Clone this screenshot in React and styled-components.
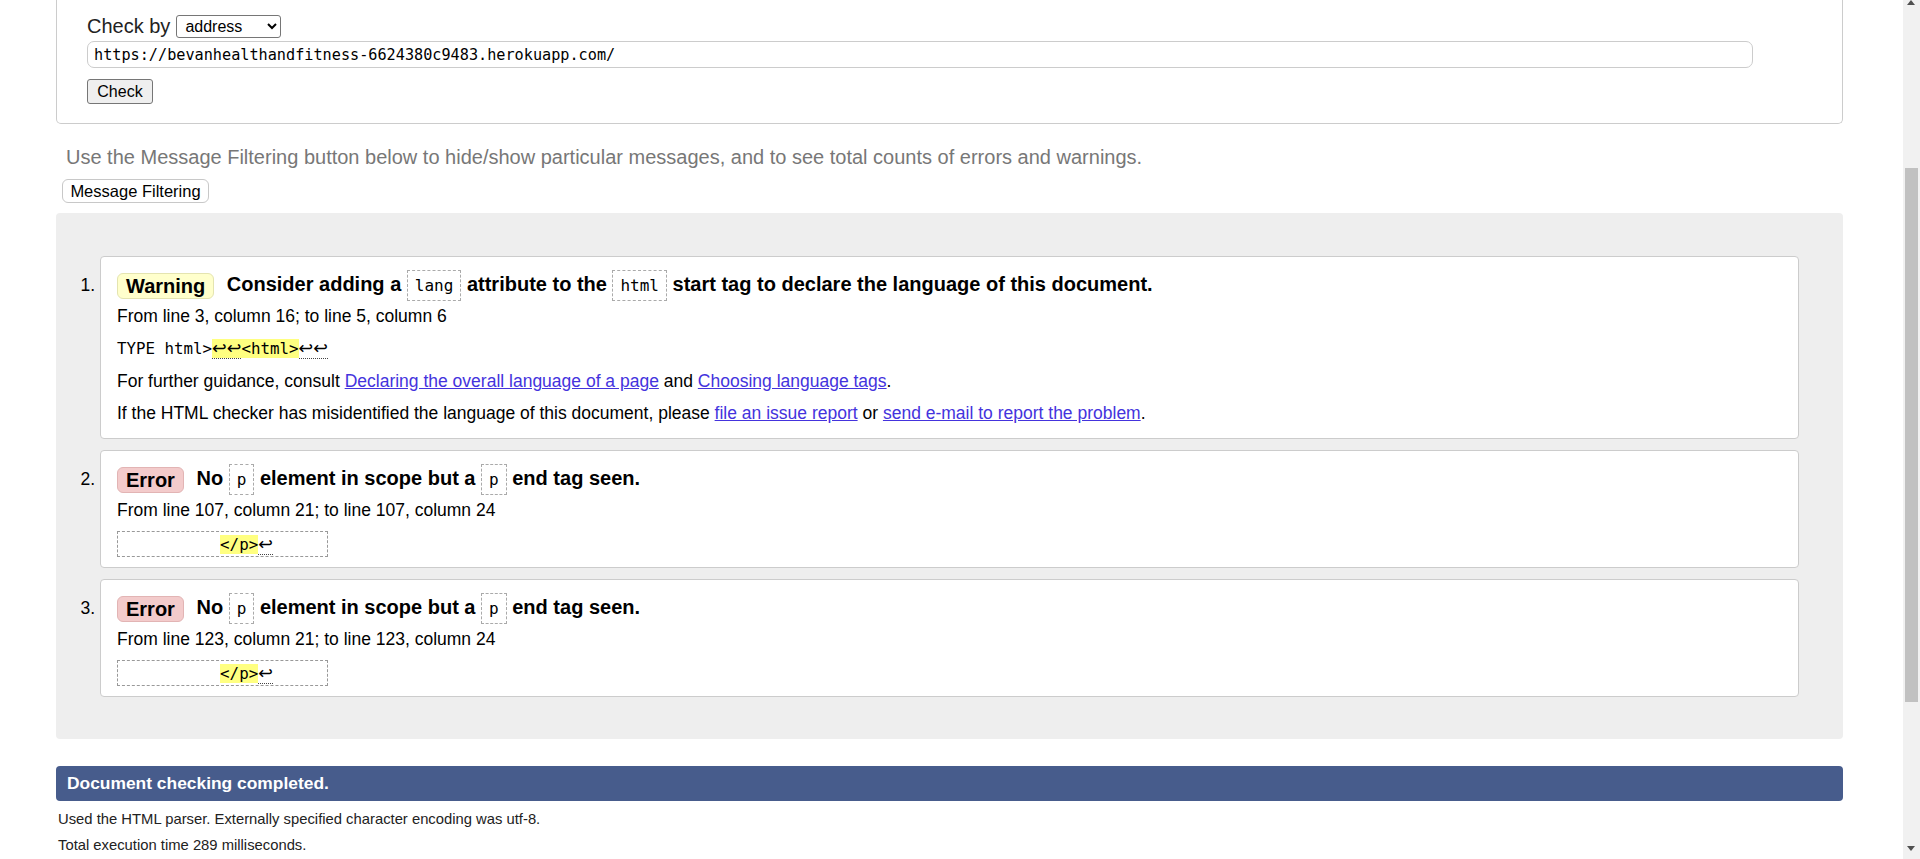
import React from "react";
import styled, { createGlobalStyle } from "styled-components";

const Global = createGlobalStyle`
  html, body {
    margin: 0;
    padding: 0;
    background: #fff;
    overflow: hidden;
  }
  body {
    font-family: "Liberation Sans", Arial, sans-serif;
    color: #000;
  }
`;

const Page = styled.div`
  width: 1920px;
  height: 859px;
  box-sizing: border-box;
  padding: 0 77px 0 56px;
  overflow: hidden;
`;

const FormBox = styled.div`
  border: 1px solid #ccc;
  border-top: none;
  border-radius: 0 0 5px 5px;
  padding: 14px 30px 19px;
`;

const CheckRow = styled.div`
  display: flex;
  align-items: center;
  gap: 6px;
  height: 24px;
  font-size: 20px;
  color: #222;
`;

const Select = styled.select`
  width: 105px;
  height: 23px;
  padding: 0 4px;
  font-family: "Liberation Sans", Arial, sans-serif;
  font-size: 16px;
  color: #000;
  background: #fff;
  border: 1px solid #767676;
  border-radius: 3px;
`;

const UrlInput = styled.input`
  display: block;
  box-sizing: border-box;
  width: 1666px;
  height: 27px;
  margin-top: 3px;
  padding: 0 6px;
  font-family: "DejaVu Sans Mono", monospace;
  font-size: 15.2px;
  color: #000;
  border: 1px solid #ccc;
  border-radius: 7px;
  outline: none;
`;

const CheckButton = styled.button`
  display: block;
  width: 66px;
  height: 25px;
  margin-top: 11px;
  padding: 0;
  font-family: "Liberation Sans", Arial, sans-serif;
  font-size: 16px;
  color: #000;
  background: #efefef;
  border: 1px solid #767676;
  border-radius: 3px;
`;

const Hint = styled.p`
  margin: 21px 0 0 10px;
  font-size: 20px;
  line-height: 24px;
  color: #777;
`;

const FilterButton = styled.button`
  display: block;
  width: 147px;
  height: 24px;
  margin: 10px 0 0 6px;
  padding: 0;
  font-family: "Liberation Sans", Arial, sans-serif;
  font-size: 16.5px;
  color: #000;
  background: #fff;
  border: 1px solid #c8c8c8;
  border-radius: 6px;
`;

const MessageList = styled.ol`
  margin: 10px 0 0;
  padding: 43px 44px 42px;
  background: #eee;
  border-radius: 4px;
  list-style: decimal;
`;

const Message = styled.li`
  background: #fff;
  border: 1px solid #ccc;
  border-radius: 4px;
  padding: 11px 16px 9px;
  font-size: 17.5px;

  & + & {
    margin-top: 11px;
  }
`;

const Title = styled.div`
  height: 32px;
  line-height: 32px;
  font-size: 20px;
  font-weight: bold;
  white-space: nowrap;
`;

const Badge = styled.span`
  display: inline-block;
  vertical-align: middle;
  line-height: 24px;
  padding: 0 8px;
  margin-right: 7px;
  border-radius: 6px;
  background: ${(p) => (p.$kind === "error" ? "#f3cbcb" : "#ffffcc")};
  border: 1px solid ${(p) => (p.$kind === "error" ? "#e2b4b4" : "#e4e4b0")};
`;

const Code = styled.code`
  display: inline-block;
  vertical-align: middle;
  padding: 5px 7px;
  font-family: "DejaVu Sans Mono", monospace;
  font-size: 16px;
  font-weight: normal;
  line-height: 19px;
  border: 1px dashed #aaa;
`;

const Line = styled.p`
  margin: 0;
  line-height: 32px;
`;

const Link = styled.a`
  color: #4433dd;
  text-decoration: underline;
`;

const Extract = styled.p`
  margin: 0;
  line-height: 32px;
  font-family: "DejaVu Sans Mono", monospace;
  font-size: 15.8px;
  white-space: pre;
`;

const ExtractRow = styled.p`
  margin: 5px 0 1px;
  line-height: 0;
`;

const ExtractBox = styled.code`
  display: inline-block;
  box-sizing: border-box;
  width: 211px;
  height: 26px;
  line-height: 24px;
  padding-left: 7px;
  font-family: "DejaVu Sans Mono", monospace;
  font-size: 15.8px;
  white-space: pre;
  border: 1px dashed #999;
`;

const Mark = styled.mark`
  background: #ffff80;
  color: inherit;
`;

const Lf = styled.span`
  font-family: "DejaVu Sans", sans-serif;
  font-size: 17.5px;
  border-bottom: 1px dotted #444;
`;

const Done = styled.div`
  margin-top: 27px;
  height: 35px;
  line-height: 35px;
  padding-left: 11px;
  font-size: 17.4px;
  font-weight: bold;
  color: #fff;
  background: #475c8c;
  border-radius: 4px;
`;

const Footer = styled.div`
  padding: 5px 0 0 2px;
`;

const FootLine = styled.p`
  margin: 0;
  line-height: 26px;
  font-size: 14.8px;
  color: #222;
`;

const Scrollbar = styled.div`
  position: fixed;
  top: 0;
  right: 0;
  width: 17px;
  height: 859px;
  background: #f1f1f1;
`;

const Thumb = styled.div`
  position: absolute;
  left: 2px;
  right: 2px;
  top: 168px;
  height: 534px;
  background: #c1c1c1;
`;

const Arrow = styled.span`
  position: absolute;
  left: 4px;
  width: 0;
  height: 0;
  border-left: 4.5px solid transparent;
  border-right: 4.5px solid transparent;
  ${(p) =>
    p.$up
      ? "top: 0; border-bottom: 5px solid #505050;"
      : "bottom: 8px; border-top: 5px solid #505050;"}
`;

const EndTagError = ({ from }) => (
  <Message>
    <Title>
      <Badge $kind="error">Error</Badge> No <Code>p</Code> element in scope but
      a <Code>p</Code> end tag seen.
    </Title>
    <Line>
      From line {from}, column 21; to line {from}, column 24
    </Line>
    <ExtractRow>
      <ExtractBox>
        {"          "}
        <Mark>{"</p>"}</Mark>
        <Lf>↩</Lf>
      </ExtractBox>
    </ExtractRow>
  </Message>
);

export default function App() {
  return (
    <>
      <Global />
      <Page>
        <FormBox>
          <CheckRow>
            Check by
            <Select defaultValue="address">
              <option value="address">address</option>
              <option value="upload">file upload</option>
              <option value="input">text input</option>
            </Select>
          </CheckRow>
          <UrlInput
            readOnly
            value="https://bevanhealthandfitness-6624380c9483.herokuapp.com/"
          />
          <CheckButton>Check</CheckButton>
        </FormBox>

        <Hint>
          Use the Message Filtering button below to hide/show particular
          messages, and to see total counts of errors and warnings.
        </Hint>
        <FilterButton>Message Filtering</FilterButton>

        <MessageList>
          <Message>
            <Title>
              <Badge>Warning</Badge> Consider adding a <Code>lang</Code>{" "}
              attribute to the <Code>html</Code> start tag to declare the
              language of this document.
            </Title>
            <Line>From line 3, column 16; to line 5, column 6</Line>
            <Extract>
              TYPE html&gt;
              <Mark>
                <Lf>↩↩</Lf>&lt;html&gt;
              </Mark>
              <Lf>↩↩</Lf>
            </Extract>
            <Line>
              For further guidance, consult{" "}
              <Link href="#">Declaring the overall language of a page</Link>{" "}
              and <Link href="#">Choosing language tags</Link>.
            </Line>
            <Line>
              If the HTML checker has misidentified the language of this
              document, please <Link href="#">file an issue report</Link> or{" "}
              <Link href="#">send e-mail to report the problem</Link>.
            </Line>
          </Message>
          <EndTagError from={107} />
          <EndTagError from={123} />
        </MessageList>

        <Done>Document checking completed.</Done>
        <Footer>
          <FootLine>
            Used the HTML parser. Externally specified character encoding was
            utf-8.
          </FootLine>
          <FootLine>Total execution time 289 milliseconds.</FootLine>
        </Footer>
      </Page>
      <Scrollbar>
        <Arrow $up />
        <Thumb />
        <Arrow />
      </Scrollbar>
    </>
  );
}
